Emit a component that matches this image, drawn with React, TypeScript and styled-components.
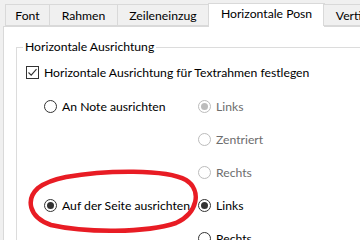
import React from 'react'
import { styled, createGlobalStyle } from 'styled-components'

const GlobalStyle = createGlobalStyle`
  html, body {
    margin: 0;
    padding: 0;
    background: #f0f0f0;
  }
  body {
    font-family: Lato, 'Noto Sans', sans-serif;
    font-size: 12.2px;
    color: #000;
  }
`

const Window = styled.div`
  position: relative;
  width: 360px;
  height: 240px;
  overflow: hidden;
  background: #f0f0f0;
  padding-left: 3px;
  box-sizing: border-box;
`

const TabStrip = styled.div`
  display: flex;
  align-items: flex-end;
  height: 27px;
  padding-left: 2px;
  position: relative;
  z-index: 1;
`

const Tab = styled.div<{ $width: number; $active?: boolean }>`
  flex: none;
  box-sizing: border-box;
  width: ${(p) => p.$width}px;
  height: ${(p) => (p.$active ? '24px' : '22px')};
  margin: ${(p) => (p.$active ? '0 -1px' : '0 0 1px')};
  border: 1px solid #d9d9d9;
  border-bottom: ${(p) => (p.$active ? 'none' : '1px solid #d9d9d9')};
  margin-left: -1px;
  background: ${(p) => (p.$active ? '#fff' : '#f0f0f0')};
  display: flex;
  justify-content: center;
  padding-top: ${(p) => (p.$active ? '2px' : '3px')};
  white-space: nowrap;
  line-height: 16px;
  &:first-child {
    margin-left: 0;
  }
`

const Panel = styled.div`
  box-sizing: border-box;
  height: 240px;
  margin-top: -1px;
  background: #fff;
  border: 1px solid #d9d9d9;
  border-right: none;
  padding: 12px 0 0 12px;
`

const GroupBox = styled.fieldset`
  margin: 0;
  padding: 9px 0 0 9px;
  border: 1px solid #dcdcdc;
  border-right: none;
  border-bottom: none;
  height: 260px;
`

const Legend = styled.legend`
  margin-left: -3px;
  padding: 0 2px;
  line-height: 16px;
`

const CheckRow = styled.label`
  display: flex;
  align-items: center;
  gap: 5px;
  height: 16px;
  margin-bottom: 10px;
  white-space: nowrap;
`

const CheckBox = styled.span`
  box-sizing: border-box;
  width: 13px;
  height: 13px;
  border: 1px solid #333;
  display: flex;
  align-items: center;
  justify-content: center;
  background: #fff;
`

const OptionGrid = styled.div`
  display: grid;
  grid-template-columns: 154px auto;
  grid-auto-rows: 33px;
  margin-left: 18px;
`

const RadioRow = styled.label<{ $col: number; $row: number; $disabled?: boolean }>`
  grid-column: ${(p) => p.$col};
  grid-row: ${(p) => p.$row};
  display: flex;
  align-items: center;
  gap: 5px;
  white-space: nowrap;
  color: ${(p) => (p.$disabled ? '#6d6d6d' : '#000')};
`

const RadioCircle = styled.span<{ $checked?: boolean; $disabled?: boolean }>`
  box-sizing: border-box;
  width: 13px;
  height: 13px;
  border-radius: 50%;
  border: 1px solid ${(p) => (p.$disabled ? '#bcbcbc' : '#333')};
  display: flex;
  align-items: center;
  justify-content: center;
  background: #fff;
  &::after {
    content: '';
    display: ${(p) => (p.$checked ? 'block' : 'none')};
    width: 7px;
    height: 7px;
    border-radius: 50%;
    background: ${(p) => (p.$disabled ? '#bcbcbc' : '#333')};
  }
`

const Highlight = styled.svg`
  position: absolute;
  left: 26px;
  top: 169px;
  width: 176px;
  height: 66px;
  pointer-events: none;
`

const Radio = ({
  label,
  col,
  row,
  checked,
  disabled,
}: {
  label: string
  col: number
  row: number
  checked?: boolean
  disabled?: boolean
}) => (
  <RadioRow $col={col} $row={row} $disabled={disabled}>
    <RadioCircle $checked={checked} $disabled={disabled} />
    {label}
  </RadioRow>
)

export default function App() {
  return (
    <Window>
      <GlobalStyle />
      <TabStrip>
        <Tab $width={45}>Font</Tab>
        <Tab $width={69}>Rahmen</Tab>
        <Tab $width={92}>Zeileneinzug</Tab>
        <Tab $width={117} $active>
          Horizontale Posn
        </Tab>
        <Tab $width={102}>Vertikale Posn</Tab>
      </TabStrip>
      <Panel>
        <GroupBox>
          <Legend>Horizontale Ausrichtung</Legend>
          <CheckRow>
            <CheckBox>
              <svg width="11" height="11" viewBox="0 0 11 11">
                <path d="M1.5 5.5 L4.2 8.2 L9.5 2.2" fill="none" stroke="#333" strokeWidth="1.1" />
              </svg>
            </CheckBox>
            Horizontale Ausrichtung für Textrahmen festlegen
          </CheckRow>
          <OptionGrid>
            <Radio label="An Note ausrichten" col={1} row={1} />
            <Radio label="Links" col={2} row={1} checked disabled />
            <Radio label="Zentriert" col={2} row={2} disabled />
            <Radio label="Rechts" col={2} row={3} disabled />
            <Radio label="Auf der Seite ausrichten" col={1} row={4} checked />
            <Radio label="Links" col={2} row={4} checked />
            <Radio label="Rechts" col={2} row={5} />
          </OptionGrid>
        </GroupBox>
      </Panel>
      <Highlight viewBox="0 0 176 66">
        <path
          d="M40 8 C80 1 140 0 160 11 C176 21 172 44 150 54 C120 64 60 64 25 56 C2 48 0 30 12 19 C20 13 30 10 40 8 Z"
          fill="none"
          stroke="#e81c24"
          strokeWidth="4.5"
        />
      </Highlight>
    </Window>
  )
}
